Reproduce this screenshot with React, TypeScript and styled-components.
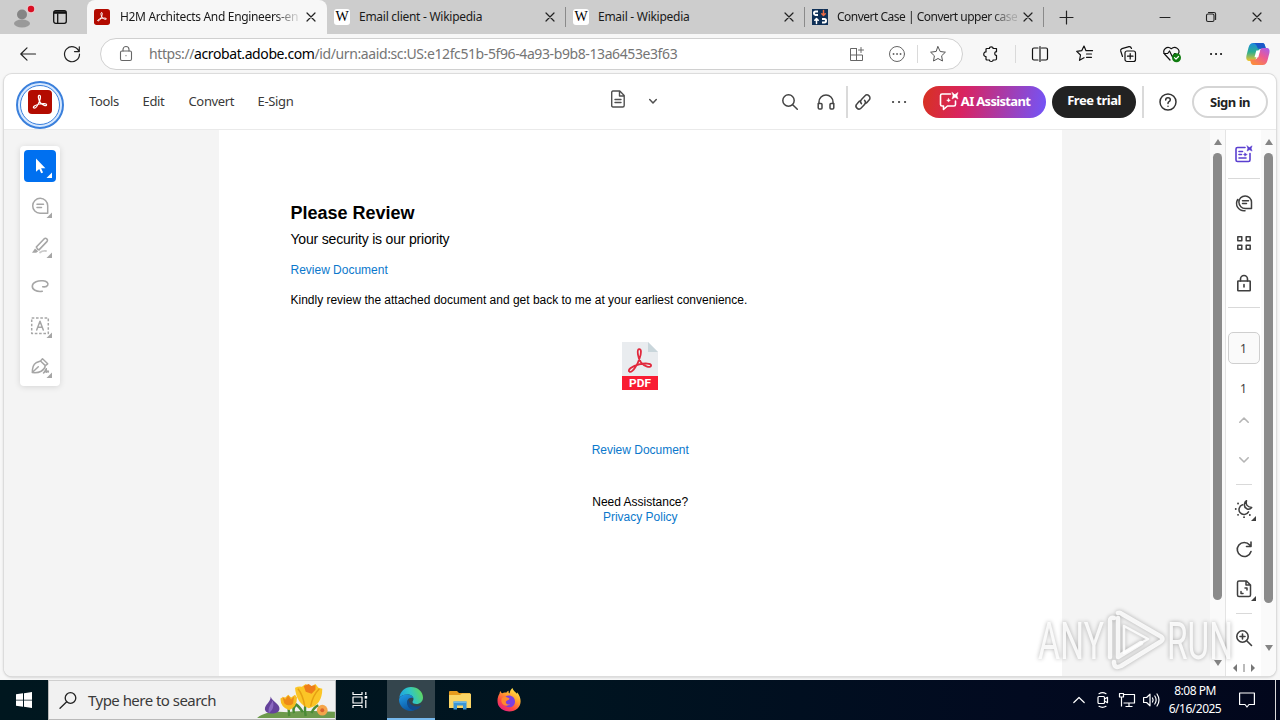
import React from 'react';
import styled, { createGlobalStyle } from 'styled-components';

const GlobalStyle = createGlobalStyle`
  * { box-sizing: border-box; }
  body { margin: 0; font-family: "Noto Sans", "Open Sans", sans-serif; overflow: hidden; }
  svg { display: block; flex: none; overflow: visible; }
`;

const Screen = styled.div`
  width: 1280px;
  height: 720px;
  display: flex;
  flex-direction: column;
  background: #f7f7f7;
  position: relative;
  overflow: hidden;
`;

const TabStrip = styled.div`
  height: 34px;
  flex: none;
  display: flex;
  align-items: stretch;
  background: #cdcdcd;
`;

const Slot = styled.div<{ $w: number }>`
  width: ${(p) => p.$w}px;
  flex: none;
  display: flex;
  align-items: center;
  justify-content: center;
`;

const Tab = styled.div<{ $active?: boolean; $w?: number }>`
  width: ${(p) => p.$w ?? 239}px;
  flex: none;
  display: flex;
  align-items: center;
  padding: 0 11px 0 7px;
  background: ${(p) => (p.$active ? '#f7f7f7' : 'transparent')};
  border-radius: ${(p) => (p.$active ? '8px 8px 0 0' : '0')};
`;

const TabTitle = styled.div<{ $fade?: boolean; $ml?: number; $ls?: number }>`
  flex: 1;
  min-width: 0;
  margin: 0 6px 0 ${(p) => p.$ml ?? 9}px;
  font-size: 12px;
  line-height: 16px;
  letter-spacing: ${(p) => p.$ls ?? -0.27}px;
  color: #1a1a1a;
  white-space: nowrap;
  ${(p) => p.$fade && 'mask-image: linear-gradient(90deg, #000 86%, rgba(0, 0, 0, 0.2) 97%);'}
`;

const TabRule = styled.div`
  width: 1px;
  height: 20px;
  margin: 7px 0 0 -1px;
  flex: none;
  background: #8a8a8a;
`;

const Spacer = styled.div`
  flex: 1;
`;

const WikiBadge = styled.div`
  width: 16px;
  height: 16px;
  flex: none;
  border-radius: 3px;
  background: #fff;
  color: #000;
  font: 14px/16px "Liberation Serif", serif;
  text-align: center;
`;

const Toolbar = styled.div`
  height: 39px;
  flex: none;
  display: flex;
  align-items: center;
  padding-left: 6px;
`;

const AddressBar = styled.div`
  width: 863px;
  height: 32px;
  margin: 1px 0 0 6px;
  flex: none;
  display: flex;
  align-items: center;
  background: #fff;
  border: 1px solid #d0d0d0;
  border-radius: 16px;
  padding-left: 4px;
`;

const Url = styled.div`
  flex: 1;
  margin-left: 2px;
  font-size: 14px;
  line-height: 18px;
  letter-spacing: -0.4px;
  color: #757575;
  white-space: nowrap;
  b { font-weight: 400; color: #000; }
`;

const VRule = styled.div<{ $h: number; $w?: number }>`
  width: ${(p) => p.$w ?? 1}px;
  height: ${(p) => p.$h}px;
  flex: none;
  background: #dadada;
`;

const Frame = styled.div`
  height: 602px;
  flex: none;
  margin: 1px 4px 0;
  border-radius: 8px;
  box-shadow: 0 0 0 1px #dcdcdc, 0 1px 3px rgba(0, 0, 0, 0.25);
  background: #fff;
  display: flex;
  flex-direction: column;
  overflow: hidden;
`;

const AppHeader = styled.div`
  height: 56px;
  flex: none;
  display: flex;
  align-items: center;
  border-bottom: 1px solid #eaeaea;
`;

const LogoRing = styled.div`
  width: 48px;
  height: 48px;
  margin: 6px 0 0 12px;
  flex: none;
  border: 2px solid #3b80dc;
  border-radius: 50%;
  background: #d6e8ff;
  display: flex;
  align-items: center;
  justify-content: center;
`;

const LogoInner = styled.div`
  width: 40px;
  height: 40px;
  flex: none;
  border: 1px solid #3b80dc;
  border-radius: 50%;
  background: #fff;
  display: flex;
  align-items: center;
  justify-content: center;
  padding-bottom: 6px;
`;

const Nav = styled.nav`
  display: flex;
  margin-left: 25px;
  padding-bottom: 2px;
  width: 514px;
  font-size: 13px;
  line-height: 18px;
  letter-spacing: -0.35px;
  color: #3a3a3a;
`;

const NavItem = styled.span<{ $w: number }>`
  width: ${(p) => p.$w}px;
  flex: none;
`;

const Pill = styled.button<{ $w: number; $kind: 'ai' | 'dark' | 'line' }>`
  width: ${(p) => p.$w}px;
  height: 32px;
  flex: none;
  padding: 0 0 ${(p) => (p.$kind === 'dark' ? 3 : p.$kind === 'ai' ? 1 : 0)}px;
  display: flex;
  align-items: center;
  justify-content: center;
  gap: 2px;
  border-radius: 16px;
  font: 700 13px/18px "Noto Sans", sans-serif;
  letter-spacing: ${(p) => (p.$kind === 'ai' ? -0.68 : -0.5)}px;
  white-space: nowrap;
  border: ${(p) => (p.$kind === 'line' ? '2px solid #d5d5d5' : '0')};
  color: ${(p) => (p.$kind === 'line' ? '#222' : '#fff')};
  background: ${(p) =>
    p.$kind === 'ai'
      ? 'linear-gradient(100deg, #d73220 0%, #d92361 33%, #7155fa 100%)'
      : p.$kind === 'dark'
        ? '#222'
        : '#fff'};
`;

const Workspace = styled.div`
  flex: 1;
  display: flex;
  min-height: 0;
`;

const Canvas = styled.div`
  width: 1206px;
  flex: none;
  display: flex;
  background: #f4f4f4;
  padding-left: 16px;
`;

const ToolPanel = styled.div`
  width: 40px;
  height: 240px;
  margin: 16px 159px 0 0;
  flex: none;
  padding: 4px;
  display: flex;
  flex-direction: column;
  gap: 8px;
  background: #fff;
  border-radius: 4px;
  box-shadow: 0 1px 6px rgba(0, 0, 0, 0.13);
`;

const ToolButton = styled.div<{ $active?: boolean }>`
  width: 32px;
  height: 32px;
  border-radius: 4px;
  background: ${(p) => (p.$active ? '#0070f0' : 'transparent')};
  color: ${(p) => (p.$active ? '#fff' : '#a6a6a6')};
`;

const Page = styled.article`
  width: 843px;
  flex: none;
  background: #fff;
  padding: 73px 72px 0 71.5px;
  font-family: "Liberation Sans", Arial, sans-serif;
  color: #000;
`;

const Heading = styled.h1`
  margin: 0;
  font-size: 18px;
  line-height: 20px;
`;

const Sub = styled.p`
  margin: 7px 0 0;
  font-size: 14px;
  line-height: 18px;
  letter-spacing: -0.19px;
`;

const Line = styled.p<{ $mt: number; $link?: boolean; $center?: boolean; $lh?: number }>`
  margin: ${(p) => p.$mt}px 0 0;
  font-size: 12px;
  line-height: ${(p) => p.$lh ?? 14}px;
  letter-spacing: -0.01px;
  color: ${(p) => (p.$link ? '#0b78cc' : '#000')};
  text-align: ${(p) => (p.$center ? 'center' : 'left')};
`;

const PdfFigure = styled.div`
  display: flex;
  justify-content: center;
  margin: 35px 1px 0 0;
`;

const ScrollBar = styled.div<{ $bottom?: number }>`
  width: 15px;
  flex: none;
  background: #fafafa;
  display: flex;
  flex-direction: column;
  align-items: center;
  padding: 9px 0 ${(p) => p.$bottom ?? 0}px;
`;

const Arrow = styled.div<{ $down?: boolean }>`
  width: 0;
  height: 0;
  flex: none;
  border: 4.5px solid transparent;
  border-top-width: ${(p) => (p.$down ? 6 : 0)}px;
  border-bottom-width: ${(p) => (p.$down ? 0 : 6)}px;
  border-top-color: #858585;
  border-bottom-color: #858585;
`;

const Thumb = styled.div<{ $h: number }>`
  width: 9px;
  height: ${(p) => p.$h}px;
  margin-top: 8px;
  flex: none;
  border-radius: 5px;
  background: #8b8b8b;
`;

const Rail = styled.div`
  width: 36px;
  flex: none;
  border-left: 1px solid #e4e4e4;
  background: #fff;
  display: flex;
  flex-direction: column;
  align-items: center;
  color: #3f3f3f;
`;

const RailItem = styled.div<{ $h?: number; $mt?: number }>`
  width: 32px;
  height: ${(p) => p.$h ?? 40}px;
  margin-top: ${(p) => p.$mt ?? 0}px;
  flex: none;
  display: flex;
  align-items: center;
  justify-content: center;
  font-size: 12px;
`;

const PageBox = styled(RailItem)`
  border: 1px solid #cfcfcf;
  border-radius: 5px;
  background: #fafafa;
`;

const RailRule = styled.div<{ $w: number; $mt?: number }>`
  width: ${(p) => p.$w}px;
  height: 1px;
  flex: none;
  margin-top: ${(p) => p.$mt ?? 0}px;
  background: #d9d9d9;
`;

const Watermark = styled.div`
  position: absolute;
  left: 1036px;
  top: 606px;
  width: 200px;
  height: 68px;
`;

const Taskbar = styled.div`
  height: 40px;
  margin-top: 4px;
  flex: none;
  display: flex;
  align-items: stretch;
  background: linear-gradient(90deg, #00171f 0%, #001420 45%, #020a20 80%, #02071c 100%);
`;

const SearchBox = styled.div`
  width: 288px;
  flex: none;
  display: flex;
  align-items: center;
  background: #f1f1f1;
  border: 1px solid #b9b9b9;
  border-top-color: #cfcfcf;
  padding-left: 10px;
  overflow: hidden;
`;

const SearchText = styled.div`
  flex: 1;
  margin-left: 11px;
  font-size: 15px;
  line-height: 20px;
  letter-spacing: -0.53px;
  color: #3a3a3a;
  white-space: nowrap;
`;

const TaskSlot = styled(Slot)<{ $active?: boolean }>`
  background: ${(p) => (p.$active ? '#34454d' : 'transparent')};
  border-bottom: ${(p) => (p.$active ? '2px solid #76b9ed' : '0')};
`;

const Clock = styled.div`
  width: 64px;
  flex: none;
  padding-top: 2px;
  text-align: center;
  color: #fff;
  font-size: 12px;
  line-height: 18px;
  letter-spacing: -0.5px;
  white-space: nowrap;
`;

type IconProps = {
  s?: number;
  w?: number;
  h?: number;
  sw?: number;
  color?: string;
  fill?: string;
  children: React.ReactNode;
};

/* Line icon whose units are pixels. */
const Icon = ({ s = 20, w, h, sw = 1.2, color = 'currentColor', fill = 'none', children }: IconProps) => (
  <svg
    width={w ?? s}
    height={h ?? s}
    viewBox={`0 0 ${w ?? s} ${h ?? s}`}
    fill={fill}
    stroke={color}
    strokeWidth={sw}
    strokeLinecap="round"
    strokeLinejoin="round"
  >
    {children}
  </svg>
);

const CloseX = () => (
  <Icon s={10} sw={1.2} color="#222">
    <path d="M1 1l8 8M9 1l-8 8" />
  </Icon>
);

const AcrobatMark = ({ size }: { size: number }) => (
  <svg width={size} height={size} viewBox="0 0 24 24">
    <rect width="24" height="24" rx="4" fill="#b30b00" />
    <path
      d="M11.200 5.300c1.900-.3 1.300 3.200.3 5.800C10.300 14.200 7.800 18.500 5.900 18c-1.700-.8 1.100-3.100 5.600-4 3.400-.7 7.100-.6 7.100.8 0 1.600-4.100.7-6.300-2.200-1.700-2.300-2.700-7-1.100-7.300z"
      fill="none"
      stroke="#fff"
      strokeWidth={size > 20 ? 1.25 : 1.5}
    />
  </svg>
);

const Corner = () => <path d="M28 22.500v5.500h-5.500z" fill="currentColor" stroke="none" />;

const Tools = () => (
  <ToolPanel>
    <ToolButton $active>
      <Icon s={32}>
        <path d="M12 8.500v13.200l3.200-2.700 2 4.300 1.900-.9-2-4.200h4.300z" fill="currentColor" stroke="none" />
        <Corner />
      </Icon>
    </ToolButton>
    <ToolButton>
      <Icon s={32} sw={1.5}>
        <path d="M23.700 23.300H16a7.500 7.500 0 1 1 7.700-7.500zM13 14.300h6.500M13 17.500h4.500" />
        <Corner />
      </Icon>
    </ToolButton>
    <ToolButton>
      <Icon s={32} sw={1.6}>
        <path d="M12.300 17l8-8.300q1.200-1 2.500.1t.3 2.600l-8.100 8.500q-1.500 0-2.700-2.900z" />
        <path d="M8 22.800l3-4.300 3.200 2.800-2 1.500z" fill="currentColor" stroke="none" />
        <path d="M16 22.500q2.500-2 6-1.500" strokeWidth="1.800" opacity=".6" />
        <Corner />
      </Icon>
    </ToolButton>
    <ToolButton>
      <Icon s={32} sw={1.6}>
        <path d="M18.300 21.300c-6 .8-10.200-1.700-10-5.300.3-4 6-5.700 10.700-5.200 4 .4 5.500 2.300 4.700 4.300-.8 1.700-3 2-5 1.700" />
      </Icon>
    </ToolButton>
    <ToolButton>
      <Icon s={32} sw={1.500}>
        <rect x="7.700" y="8" width="16.600" height="15.500" strokeDasharray="2.600 1.700" strokeLinecap="butt" />
        <path d="M12.700 20L16 11.300 19.300 20M13.900 17.300h4.200" />
        <Corner />
      </Icon>
    </ToolButton>
    <ToolButton>
      <Icon s={32} sw={1.500}>
        <path d="M8.300 22.500c0-4 1-8.200 3.700-9.700l4.500-1.800 4.800 4.600c-.7 5-6 7.700-13 6.900zl6-5.700M16.500 11l2-2.200 5.200 5-2.400 1.800" />
        <path d="M19.500 23c1-.5 2-3 2.800-4.300l-.2 3.600 2-1.300.3 1" />
        <Corner />
      </Icon>
    </ToolButton>
  </ToolPanel>
);

const PdfIcon = () => (
  <svg width="36" height="48" viewBox="0 0 36 48">
    <path d="M0 0h26l10 10v24H0z" fill="#e9ecef" />
    <path d="M26 0l10 10H26z" fill="#c9d6db" />
    <path d="M17 7.200c2.700-.4 2.300 4.500.6 9C15.500 22.700 10.800 30.800 7.600 29.800c-3-1.500 2.800-6.100 9.500-7.500 5.500-1.200 12.200-1.200 12 1.300-.3 2.600-7 1-10.200-3.300C15.800 16 14.700 7.600 17 7.200z"
      fill="none"
      stroke="#e1283c"
      strokeWidth="1.8"
    />
    <path d="M0 34h36v14H0z" fill="#f91c33" />
    <text x="18" y="45.200" textAnchor="middle" fill="#fff" fontFamily="Roboto, sans-serif" fontWeight="700" fontSize="11.500" textLength="22" lengthAdjust="spacingAndGlyphs">PDF</text>
  </svg>
);

const Copilot = () => (
  <svg width="24" height="22" viewBox="0 0 24 22">
    <defs>
      <linearGradient id="cpA" x1="0" y1="0" x2="0" y2="1">
        <stop offset="0" stopColor="#1b8be0" />
        <stop offset=".5" stopColor="#2cae8f" />
        <stop offset="1" stopColor="#f2c52c" />
      </linearGradient>
      <linearGradient id="cpB" x1="1" y1="0" x2="0.300" y2="1">
        <stop offset="0" stopColor="#a45cf0" />
        <stop offset=".5" stopColor="#ec5a93" />
        <stop offset="1" stopColor="#fb8b3e" />
      </linearGradient>
    </defs>
    <path d="M13 0h3.600c1.400 0 2 1 2.400 2.500l1 3.300h-4.500c-2 0-2.800 1-3.300 2.700L10 15.300C9.400 17 8.600 18 7 18H3.500C.7 18-.2 15.800.5 12.500L2.400 5C3.300 1.700 4.500 0 7.500 0z" fill="url(#cpA)" />
    <path d="M6 0h10.500c1.400 0 2 1 2.400 2.500l1 3.300h-4.500L12 5.800 10.500 2.500C9.700.8 8 0 6 0z" fill="#1b58c8" />
    <path d="M17 5h3.500c2.800 0 3.500 2 2.900 5L21.600 17c-.9 3.300-2.200 5-5 5H7.400c-1.500 0-2.200-1-2.600-2.500L4 16.500h4.500c2 0 2.700-1 3.200-2.700L14 7.500C14.500 5.800 15.500 5 17 5z" fill="url(#cpB)" />
    <path d="M10.300 7.500h3.800l-1.800 6.800H8.500z" fill="#fff" />
  </svg>
);

const EdgeLogo = () => (
  <svg width="24" height="24" viewBox="0 0 24 24">
    <defs>
      <linearGradient id="egA" x1="0" y1="0.600" x2="1" y2="0.300">
        <stop offset="0" stopColor="#1b9fe4" />
        <stop offset=".5" stopColor="#2fc6c6" />
        <stop offset="1" stopColor="#63d957" />
      </linearGradient>
      <linearGradient id="egB" x1="0" y1="0" x2="0.400" y2="1">
        <stop offset="0" stopColor="#1f9ce8" />
        <stop offset="1" stopColor="#0c59a4" />
      </linearGradient>
    </defs>
    <path d="M.3 11C1 4.500 6 0 12 0c7 0 12 5 12 10.500 0 4-3 6.500-6.500 6.500-2.500 0-4-1-4-2 0-.8 1-1.200 1-3C14.500 9.500 12 7.500 8.500 7.500 4.500 7.500 1.500 9 .3 11z" fill="url(#egA)" />
    <path d="M0 12.500C.5 9.500 4 7.500 8.500 7.500c3 0 5.500 1.500 6 3.700C10 9.500 7.500 13 8.500 17c1 3.500 4 5.500 7 6.300C8 26 0 20.500 0 12.500z" fill="url(#egB)" />
    <path d="M9 12.500c-2.500 4.500.5 10.500 6.500 10.800 3-.8 5.500-2.500 7-5-4 2.200-9 1.200-11-1.300-1.200-1.500-1.500-3-2.500-4.500z" fill="#114a8b" />
  </svg>
);

const FolderLogo = () => (
  <svg width="22" height="19" viewBox="0 0 22 19">
    <path d="M0 1q0-1 1-1h7l2 2h11v4H0z" fill="#e79b1d" />
    <path d="M0 4h11l2-1.500h8q1 0 1 1V17H0z" fill="#fbd565" />
    <path d="M4.500 18.500v-8h13v8H14v-4H8v4z" fill="#3a95d6" />
    <path d="M4.500 10.500h13v1.500h-13z" fill="#6db8ea" />
  </svg>
);

const FirefoxLogo = () => (
  <svg width="24" height="24" viewBox="0 0 24 24">
    <defs>
      <linearGradient id="ffA" x1="0.850" y1="0" x2="0.200" y2="1">
        <stop offset="0" stopColor="#fff14f" />
        <stop offset=".4" stopColor="#ffa02c" />
        <stop offset=".7" stopColor="#ff4a43" />
        <stop offset="1" stopColor="#e31a88" />
      </linearGradient>
    </defs>
    <path d="M3.500 3c.3 1.300 1 2 1.800 2.300C6.500 4.500 8 4.300 9.200 4.700 10 3.500 11 3 12 2.800c-1 1.200-.5 2.200.5 2.800C13 3.500 13.500 1.300 15.500 0c.5 2.700 3 3.800 4.500 5.800 0 0 .3-.8.200-1.500 4.500 5.500 4.500 12.500.3 16.200C15.500 25 5 24.500 1.200 17-.3 12.500.8 8 2.500 5.800 2.500 4.800 3 3.700 3.500 3z" fill="url(#ffA)" />
    <path d="M8.500 8.500c4-2.500 9.500 0 9.500 5 0 4.500-4 6.500-7.500 5.500-3-1-4.500-4-3-6.500 1 .7 2.500.4 3.500-.5l1.300-.6c-.4-1.200-2.300-1.400-3.800-2.900z" fill="#7a3fe0" />
    <path d="M5 10c2-1.500 4.500-1 7.500.5-.3 1.500-2.500 1.200-3.300 2.700C8 15 10 17 13 16.300c-2.500 2.500-7.500 1.500-8.500-2.300-.3-1.500 0-3 .5-4z" fill="#ff8a2e" />
  </svg>
);

const Flowers = () => (
  <svg width="78" height="36" viewBox="0 1 80 37">
    <path d="M0 38c8-7 20-7 32-6 12-2 30-1 48-.5V38z" fill="#6d9a4c" />
    <path d="M33 36q-1-6 0-12M50 36q-2-8 1-16M38 33q-2-6 3-9M47 32q-4-6-7-8M56 33q2-6 7-8" stroke="#4a8b36" strokeWidth="2.500" fill="none" />
    <path d="M14 16c1 5 10 8 9 13-1 6-14 6-15 0 0-5 6-7 6-13z" fill="#65429b" />
    <path d="M16 20c-2 5-5 7-4 13 4-3 6-7 4-13z" fill="#8a68c0" />
    <path d="M24 18q3-2 5-1l3-3 3 3 4-3 2 3q0 10-8 13-9-3-9-12z" fill="#f8bd21" />
    <path d="M26 16l3 3 3-4 3 4 3-3-1 7q-4 4-9 0z" fill="#ee8a18" />
    <path d="M39 7q4-2 7-1l4-3 5 3 5-3 3 4 4 1q0 17-14 20-13-5-14-21z" fill="#fbc526" />
    <path d="M48 5l5-2 3 2 4-1v5l-4 4-6-2z" fill="#ee7d1a" />
    <path d="M42 8q5 6 7 18M64 8q-7 7-9 18" stroke="#e6a012" strokeWidth="1.500" fill="none" />
    <circle cx="67" cy="30" r="5.500" fill="#f5a54a" />
    <circle cx="67" cy="30" r="2" fill="#d9622b" />
  </svg>
);

const WatermarkArt = styled.svg`
  filter: drop-shadow(0 0 2px rgba(0, 0, 0, 0.35));
`;

const AnyRun = () => (
  <Watermark>
    <WatermarkArt width="200" height="68" viewBox="0 0 200 68">
      <g fill="#fff" fillOpacity=".85" fontFamily="Roboto, sans-serif" fontSize="51">
        <text x="2" y="53" textLength="66" lengthAdjust="spacingAndGlyphs">ANY</text>
        <text x="131" y="53" textLength="66" lengthAdjust="spacingAndGlyphs">RUN</text>
      </g>
      <g fill="none" stroke="#fff" strokeOpacity=".85" strokeWidth="5" strokeLinejoin="round" strokeLinecap="round">
        <path d="M74 51V15q0-4 4-3M82 12v39l23-14M82 7q2-1 4 1l38 22q5 3 0 6L85 60q-7 3-7-4" strokeWidth="4.500" />
        <path d="M88 20l24 13-24 14z" strokeWidth="2.500" />
      </g>
    </WatermarkArt>
  </Watermark>
);

export default function App() {
  return (
    <Screen>
      <GlobalStyle />
      <TabStrip>
        <Slot $w={44}>
          <Icon w={24} h={24} color="none">
            <circle cx="12" cy="9.500" r="5" fill="#858585" />
            <ellipse cx="12" cy="18.500" rx="8" ry="4" fill="#999" />
            <circle cx="21" cy="4" r="4.500" fill="#e6c9cc" />
            <circle cx="21" cy="4" r="3.200" fill="#d90f23" />
          </Icon>
        </Slot>
        <Slot $w={32}>
          <Icon w={14} h={14} sw={1.300} color="#111">
            <rect x=".7" y=".7" width="12.600" height="12.600" rx="2" />
            <path d="M1 2.500h12" strokeWidth="2.600" strokeLinecap="butt" />
            <path d="M4.700 4v9" />
          </Icon>
        </Slot>
        <Slot $w={11} />
        <Tab $active $w={240}>
          <AcrobatMark size={16} />
          <TabTitle $fade $ml={10} $ls={-0.33}>H2M Architects And Engineers-en</TabTitle>
          <CloseX />
        </Tab>
        <Tab>
          <WikiBadge>W</WikiBadge>
          <TabTitle>Email client - Wikipedia</TabTitle>
          <CloseX />
        </Tab>
        <TabRule />
        <Tab>
          <WikiBadge>W</WikiBadge>
          <TabTitle>Email - Wikipedia</TabTitle>
          <CloseX />
        </Tab>
        <TabRule />
        <Tab>
          <Icon s={16} color="#fff" sw={2}>
            <rect width="16" height="16" fill="#0f3057" stroke="none" />
            <path d="M6 2.500H3.500q-1.500 0-1.500 1.700T3.500 6H6M10 10h2.500q1.500 0 1.500 1.700t-1.500 1.700H10" strokeLinecap="butt" />
            <path d="M11.500 1.500V6M9.800 4.800l1.700 1.700 1.700-1.700" stroke="#ee6b45" strokeWidth="1.500" />
            <path d="M4.500 14.500V10M2.800 11.200l1.700-1.700 1.700 1.700" strokeWidth="1.500" />
          </Icon>
          <TabTitle $fade $ls={-0.5}>Convert Case | Convert upper case</TabTitle>
          <CloseX />
        </Tab>
        <TabRule />
        <Slot $w={44}>
          <Icon s={13} sw={1.200} color="#222"><path d="M6.500 0v13M0 6.500h13" /></Icon>
        </Slot>
        <Spacer />
        <Slot $w={46}>
          <Icon s={10} sw={1} color="#222"><path d="M0 5.500h10" /></Icon>
        </Slot>
        <Slot $w={46}>
          <Icon s={10} sw={1.100} color="#222">
            <rect x=".5" y="2" width="7.500" height="7.500" rx="1.500" />
            <path d="M2.500.5H8q1.600 0 1.600 1.600v5.400" />
          </Icon>
        </Slot>
        <Slot $w={46}><CloseX /></Slot>
      </TabStrip>

      <Toolbar>
        <Slot $w={44}>
          <Icon w={16} h={14} sw={1.200} color="#222"><path d="M15.500 7H1M7 .8L.8 7 7 13.200" /></Icon>
        </Slot>
        <Slot $w={44}>
          <Icon s={16} sw={1.200} color="#222"><path d="M15 5.500A7.500 7.500 0 1 0 15.500 8M15.300.8v4.800h-4.800" /></Icon>
        </Slot>
        <AddressBar>
          <Slot $w={42}>
            <Icon w={12} h={16} sw={1.100} color="#666">
              <rect x=".5" y="5" width="11" height="9.500" rx="1.500" />
              <path d="M3 5V3.500a3 3 0 0 1 6 0V5M6 9.500v.3" />
            </Icon>
          </Slot>
          <Url>https://<b>acrobat.adobe.com</b>/id/urn:aaid:sc:US:e12fc51b-5f96-4a93-b9b8-13a6453e3f63</Url>
          <Slot $w={40}>
            <Icon s={14} sw={1} color="#666">
              <path d="M6.500 1.500H.5v12h12V8H.5M6.500 1.500v12M11 .5v5M8.500 3h5" />
            </Icon>
          </Slot>
          <Slot $w={40}>
            <Icon s={16} sw={1} color="#666">
              <circle cx="8" cy="8" r="7.500" />
              <path d="M4.500 8h.1M8 8h.1M11.500 8h.1" strokeWidth="1.800" />
            </Icon>
          </Slot>
          <VRule $h={18} />
          <Slot $w={40}>
            <Icon s={16} sw={1} color="#555">
              <path d="M8 .7l2.200 4.800 5.200.7-3.800 3.600.9 5.200L8 12.500 3.500 15l.9-5.200L.6 6.200l5.200-.7z" />
            </Icon>
          </Slot>
          <Slot $w={4} />
        </AddressBar>
        <Slot $w={4} />
        <Slot $w={48}>
          <Icon s={16} sw={1.200} color="#111">
            <path d="M4 2.500h2.500C6 .3 10.500.3 10 2.500h3.500v3.300c-2.300-.7-2.300 4.200 0 3.500v3.500c0 .7-.4 1.200-1.200 1.200H10c.3 2-3.800 2-3.500 0H4.200Q3 14 3 13v-2.500C0 11 0 5.500 3 6V3.500q0-1 1-1z" />
          </Icon>
        </Slot>
        <VRule $h={18} />
        <Slot $w={47}>
          <Icon s={16} sw={1.200} color="#111">
            <path d="M6 2H2q-1.500 0-1.500 1.500v9Q.5 14 2 14h4M9.500 2H14q1.500 0 1.500 1.500v9Q15.500 14 14 14H9.500M8 .5v15" />
          </Icon>
        </Slot>
        <Slot $w={42}>
          <Icon s={17} sw={1.200} color="#111">
            <path d="M10 5.700L8 1 5.700 5.700l-5 .7L4.500 10l-1 5.300L8 12.700M10.500 5.700h6M10.500 9h5M10.500 12.300h5" />
          </Icon>
        </Slot>
        <Slot $w={45}>
          <Icon s={16} sw={1.200} color="#111">
            <rect x="5" y="5" width="10.500" height="10.500" rx="2" />
            <path d="M10.200 7.500v5.500M7.500 10.200H13M2.500 10.500L.7 5Q.3 3.200 2 2.600L9 .6q1.800-.3 2.500 1.900" />
          </Icon>
        </Slot>
        <Slot $w={44}>
          <Icon w={18} h={16} sw={1.200} color="#111">
            <path d="M7 14L1.500 8C-1 4 4-1 8.300 2.700 12.500-1 17.500 4 15.500 7.500M.7 7.500h4L6.500 5l3 6 2-3.500h1" />
            <circle cx="13.500" cy="11.700" r="4.500" fill="#107c10" stroke="none" />
            <path d="M11.500 11.700l1.500 1.500 2.500-2.700" stroke="#fff" />
          </Icon>
        </Slot>
        <Slot $w={43}>
          <Icon w={14} h={4} color="#111" sw={2}><path d="M2 2h.1M7 2h.1M12 2h.1" /></Icon>
        </Slot>
        <Slot $w={41}><Copilot /></Slot>
      </Toolbar>

      <Frame>
        <AppHeader>
          <LogoRing><LogoInner><AcrobatMark size={24} /></LogoInner></LogoRing>
          <Nav>
            <NavItem $w={53.5}>Tools</NavItem>
            <NavItem $w={46}>Edit</NavItem>
            <NavItem $w={69}>Convert</NavItem>
            <NavItem $w={60}>E-Sign</NavItem>
          </Nav>
          <Slot $w={30}>
            <Icon w={14} h={24} sw={1.400} color="#505050">
              <path d="M2 1h6.800l4.400 4.500v10q0 1.500-1.500 1.500H2Q.7 17 .7 15.500v-13Q.7 1 2 1zM8.500 1.500V6h4.500M4 9.500h6M4 12.500h6" />
            </Icon>
          </Slot>
          <Slot $w={40}>
            <Icon w={8} h={5} sw={1.500} color="#505050"><path d="M.7.500L4 4 7.300.5" /></Icon>
          </Slot>
          <Spacer />
          <Slot $w={32}>
            <Icon s={16} sw={1.500} color="#444"><circle cx="6.500" cy="6.500" r="5.700" /><path d="M10.700 10.700l4.600 4.600" /></Icon>
          </Slot>
          <Slot $w={40}>
            <Icon w={18} h={16} sw={1.500} color="#444">
              <path d="M2 9.500V8a7 7 0 0 1 14 0v1.500M1.500 9.500H4q1 0 1 1V14q0 1-1 1H2.500q-1.300 0-1.300-1.300V9.500zM16.500 9.500H14q-1 0-1 1V14q0 1 1 1h1.500q1.300 0 1.300-1.300V9.500z" />
            </Icon>
          </Slot>
          <VRule $h={32} $w={2} />
          <Slot $w={30}>
            <Icon s={16} sw={1.500} color="#444">
              <path d="M6.500 9.700a3 3 0 0 1 0-4.200l3.300-3.600a3 3 0 0 1 4.300 4.200L11.500 9M9.500 6.300a3 3 0 0 1 0 4.200l-3.300 3.600a3 3 0 0 1-4.300-4.200L4.500 7" />
            </Icon>
          </Slot>
          <Slot $w={41}>
            <Icon w={14} h={4} color="#444" sw={2.2}><path d="M1 2h.1M7 2h.1M13 2h.1" /></Icon>
          </Slot>
          <Slot $w={4} />
          <Pill $kind="ai" $w={123}>
            <Icon s={20} sw={1.600} color="#fff">
              <path d="M11.500 3H3Q1.500 3 1.500 4.500v9Q1.500 15 3 15h1.500v3.500L8.500 15H15q1.500 0 1.500-1.500V10" />
              <path d="M16 3.500l3-2-1 3.200 1 3.300-3-1.700L13 8l1-3.300-1-3.200zM9.500 7.500l.6 1.300 1.300.5-1.300.6-.6 1.200-.5-1.200-1.300-.6 1.300-.5z" fill="#fff" strokeWidth=".5" />
            </Icon>
            AI Assistant
          </Pill>
          <Slot $w={6} />
          <Pill $kind="dark" $w={84}>Free trial</Pill>
          <Slot $w={6} />
          <VRule $h={32} $w={2} />
          <Slot $w={48}>
            <Icon s={18} sw={1.500} color="#333">
              <circle cx="9" cy="9" r="8" />
              <path d="M6.700 7q0-2.200 2.300-2.200t2.300 2q0 1.200-1.300 1.900-1 .6-1 1.800M9 13.200v.1" />
            </Icon>
          </Slot>
          <Pill $kind="line" $w={76}>Sign in</Pill>
          <Slot $w={8} />
        </AppHeader>

        <Workspace>
          <Canvas>
            <Tools />
            <Page>
              <Heading>Please Review</Heading>
              <Sub>Your security is our priority</Sub>
              <Line $mt={15} $link>Review Document</Line>
              <Line $mt={16}>Kindly review the attached document and get back to me at your earliest convenience.</Line>
              <PdfFigure><PdfIcon /></PdfFigure>
              <Line $mt={53} $link $center>Review Document</Line>
              <Line $mt={38} $center $lh={15}>Need Assistance?</Line>
              <Line $mt={0} $link $center $lh={15}>Privacy Policy</Line>
            </Page>
          </Canvas>
          <ScrollBar $bottom={10}>
            <Arrow />
            <Thumb $h={447} />
            <Spacer />
            <Arrow $down />
          </ScrollBar>
          <Rail>
            <RailItem $h={48}>
              <Icon s={18} sw={1.600} color="#5a3fd0">
                <path d="M10 2.500H2.500Q1 2.500 1 4v11q0 1.500 1.500 1.500h11Q15 16.500 15 15V8.500M4 6.500h3.500M4 9.500h2.500M4 13h7" />
                <path d="M14.500 2.500l2.600-1.700-.9 2.700.9 2.600-2.600-1.300L12 6.100l.8-2.600-.8-2.700zM10 8l1 1 1.300.5-1.300.6-1 1.200-.5-1.200-1-.6 1-.5z" fill="#5a3fd0" strokeWidth=".5" />
              </Icon>
            </RailItem>
            <RailRule $w={32} />
            <RailItem $mt={4}>
              <Icon s={18} sw={1.500}>
                <path d="M16.500 14.500h-6.200a6.300 6.300 0 1 1 6.200-6.400zM7.500 6.700h6M7.500 9.500h4M2.700 5.500C-.5 11 3.500 17.300 10 16.700" />
              </Icon>
            </RailItem>
            <RailItem>
              <Icon s={14} sw={1.500}>
                <rect x=".8" y=".8" width="4" height="4" /><rect x="9.200" y=".8" width="4" height="4" />
                <rect x=".8" y="9.200" width="4" height="4" /><rect x="9.200" y="9.200" width="4" height="4" />
              </Icon>
            </RailItem>
            <RailItem>
              <Icon w={14} h={18} sw={1.600}>
                <rect x=".8" y="7" width="12.400" height="9.700" rx=".5" />
                <path d="M3.500 7V5a3.500 3.500 0 0 1 7 0v2M7 10.500v2.500" />
              </Icon>
            </RailItem>
            <RailRule $w={32} $mt={4} />
            <PageBox $h={32} $mt={24}>1</PageBox>
            <RailItem $mt={4}>1</RailItem>
            <RailItem $h={22} $mt={1}>
              <Icon w={10} h={6} sw={1.600} color="#b5b5b5"><path d="M.8 5.200L5 1l4.200 4.200" /></Icon>
            </RailItem>
            <RailItem $mt={9}>
              <Icon w={10} h={6} sw={1.600} color="#b5b5b5"><path d="M.8.8L5 5 9.200.8" /></Icon>
            </RailItem>
            <RailRule $w={16} $mt={4} />
            <RailItem $mt={4}>
              <Icon s={32} sw={1.500}>
                <path d="M14.500 11.800a5 5 0 1 0 6 7M18.500 7.700q-1.500 6 5.200 6.800-2 2.600-5 1.200-2.700-1.500-2.300-4.600.4-2.300 2.100-3.400z" />
                <path d="M7.700 16h.1M10 10.500h.1M10 21.800h.1M16 24.200h.1M21.800 22h.1" strokeWidth="1.800" />
                <path d="M28 23v5h-5z" fill="currentColor" stroke="none" />
              </Icon>
            </RailItem>
            <RailItem>
              <Icon s={16} sw={1.600}><path d="M15 10.500A7 7 0 1 1 13.700 4l1 1M15 1v4.500h-4.500" /></Icon>
            </RailItem>
            <RailItem>
              <Icon s={32} sw={1.500}>
                <path d="M11 8h7.500l4 4v10q0 1.500-1.500 1.500H11Q9.500 23.500 9.500 22V9.500Q9.500 8 11 8zM18 8.500V12h4.500M17 15h2v2M13 18.500v2h2" />
                <path d="M28 23v5h-5z" fill="currentColor" stroke="none" />
              </Icon>
            </RailItem>
            <RailRule $w={16} $mt={4} />
            <RailItem $mt={4}>
              <Icon s={16} sw={1.600}><circle cx="6.500" cy="6.500" r="5.700" /><path d="M10.700 10.700l4.800 4.800M6.500 4v5M4 6.500h5" /></Icon>
            </RailItem>
            <RailItem $h={18} $mt={1}>
              <Icon w={22} h={8} color="none" fill="#777">
                <path d="M4 0v8L0 4zM18 0v8l4-4zM10.500 0h1v8h-1z" />
              </Icon>
            </RailItem>
          </Rail>
          <ScrollBar $bottom={25}>
            <Arrow />
            <Thumb $h={450} />
            <Spacer />
            <Arrow $down />
          </ScrollBar>
        </Workspace>
      </Frame>

      <Taskbar>
        <TaskSlot $w={48}>
          <Icon s={16} color="none" fill="#fff">
            <path d="M0 2.300L7 1.300v6.400H0zM8 1.200L16 0v7.700H8zM0 8.500h7v6.300l-7-1zM8 8.500h8V16l-8-1.200z" />
          </Icon>
        </TaskSlot>
        <SearchBox>
          <Icon w={18} h={17} sw={1.300} color="#222"><circle cx="11.500" cy="6" r="5.300" /><path d="M7.700 9.800L1 16.300" /></Icon>
          <SearchText>Type here to search</SearchText>
          <Flowers />
        </SearchBox>
        <TaskSlot $w={48}>
          <Icon w={16} h={16} sw={1.200} color="#fff">
            <path d="M1 0v2.500h9V0M1 16v-2.500h9V16M1 5h9v6H1zM13.800 0v3M13.800 8v8" strokeLinecap="butt" />
            <rect x="12.600" y="4" width="2.600" height="2.600" fill="#fff" stroke="none" />
          </Icon>
        </TaskSlot>
        <Slot $w={3} />
        <TaskSlot $w={48} $active><EdgeLogo /></TaskSlot>
        <TaskSlot $w={49}><FolderLogo /></TaskSlot>
        <TaskSlot $w={49}><FirefoxLogo /></TaskSlot>
        <Spacer />
        <Slot $w={24}>
          <Icon w={12} h={6} sw={1.200} color="#fff"><path d="M.8 5.500L6 .5l5.200 5" /></Icon>
        </Slot>
        <Slot $w={24}>
          <Icon w={12} h={16} sw={1.200} color="#fff">
            <rect x="1" y="4.500" width="6.500" height="7" rx="1" />
            <path d="M7.500 7l3-1.700v5.400l-3-1.700M2 1.700q3.500-2 7 0M2 14.300q3.500 2 7 0" />
          </Icon>
        </Slot>
        <Slot $w={24}>
          <Icon s={16} sw={1.200} color="#fff">
            <path d="M5 2.500h10.500v8.500H4.500M10 11v3.500M6.500 14.500h7M.5 1.500h4v3.500h-4zM2.500 5v9.500" strokeLinecap="butt" />
          </Icon>
        </Slot>
        <Slot $w={24}>
          <Icon w={17} h={14} sw={1.200} color="#fff">
            <path d="M.6 4.500h3L7 1.200v11.600L3.600 9.500h-3zM9.500 5q1.300 2 0 4M11.800 3q2.700 4 0 8M14 1q4 6 0 12" />
          </Icon>
        </Slot>
        <Clock>8:08 PM<br />6/16/2025</Clock>
        <Slot $w={40}>
          <Icon w={16} h={16} sw={1.200} color="#fff"><path d="M.6 1h14.800v11.500H10L8 15l-2-2.500H.6z" /></Icon>
        </Slot>
        <Slot $w={8} />
        <VRule $h={40} />
        <Slot $w={4} />
      </Taskbar>
      <AnyRun />
    </Screen>
  );
}
